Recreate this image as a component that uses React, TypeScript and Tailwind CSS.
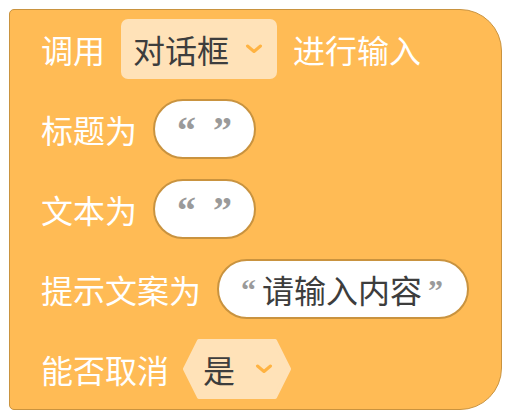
import React from "react";

const Chevron = () => (
  <svg width="18" height="10" viewBox="0 0 18 10" className="shrink-0">
    <path d="M2.5 2 L9 7.5 L15.5 2" fill="none" stroke="#ffb342" strokeWidth="3" strokeLinecap="round" strokeLinejoin="round" />
  </svg>
);

const Label = ({ children }: { children: React.ReactNode }) => (
  <span className="text-[32px] leading-none text-white">{children}</span>
);

const Quote = ({ c, big }: { c: string; big?: boolean }) => (
  <span
    className={
      big
        ? "self-start mt-[10px] text-[38px] leading-none font-bold text-[#9a9a9a] [font-family:'Liberation_Serif',serif]"
        : "self-start mt-[14px] text-[30px] leading-none font-bold text-[#9a9a9a] [font-family:'Liberation_Serif',serif]"
    }
  >
    {c}
  </span>
);

export default function App() {
  return (
    <div className="w-[512px] h-[420px] bg-white pt-[9px] pl-[9px] [font-family:'Noto_Sans_CJK_SC','Noto_Sans',sans-serif]">
      <div className="w-[493px] h-[401px] bg-[#ffbb55] border-[1.5px] border-[#c9933f] rounded-tl-[5px] rounded-bl-[5px] rounded-tr-[42px] rounded-br-[42px] pl-[31px] pt-[9px] flex flex-col gap-5">
        <div className="h-[60px] flex items-center gap-4">
          <Label>调用</Label>
          <div className="h-[60px] w-[156px] rounded-[7px] bg-[#ffe2b8] flex items-center pl-[12px] pr-[14px] justify-between">
            <span className="text-[32px] leading-none text-[#3d3d3d]">对话框</span>
            <Chevron />
          </div>
          <Label>进行输入</Label>
        </div>
        <div className="h-[60px] flex items-center gap-4">
          <Label>标题为</Label>
          <div className="h-[60px] w-[103px] rounded-full bg-white border-2 border-[#c9933f] flex items-start justify-between px-[22px]">
            <Quote c="“" big />
            <Quote c="”" big />
          </div>
        </div>
        <div className="h-[60px] flex items-center gap-4">
          <Label>文本为</Label>
          <div className="h-[60px] w-[103px] rounded-full bg-white border-2 border-[#c9933f] flex items-start justify-between px-[22px]">
            <Quote c="“" big />
            <Quote c="”" big />
          </div>
        </div>
        <div className="h-[60px] flex items-center gap-4">
          <Label>提示文案为</Label>
          <div className="h-[60px] w-[252px] rounded-full bg-white border-2 border-[#c9933f] flex items-center pl-[22px] gap-[6px]">
            <Quote c="“" />
            <span className="text-[32px] leading-none text-[#3d3d3d]">请输入内容</span>
            <Quote c="”" />
          </div>
        </div>
        <div className="h-[60px] flex items-center gap-[14px]">
          <Label>能否取消</Label>
          <div className="relative h-[60px] w-[108px] flex items-center justify-between pl-[20px] pr-[18px]">
            <svg className="absolute inset-0" width="108" height="60" viewBox="0 0 108 60">
              <polygon points="16,2 92,2 106,30 92,58 16,58 2,30" fill="#ffe2b8" stroke="#ffe2b8" strokeWidth="4" strokeLinejoin="round" />
            </svg>
            <span className="relative text-[32px] leading-none text-[#3d3d3d]">是</span>
            <span className="relative"><Chevron /></span>
          </div>
        </div>
      </div>
    </div>
  );
}
